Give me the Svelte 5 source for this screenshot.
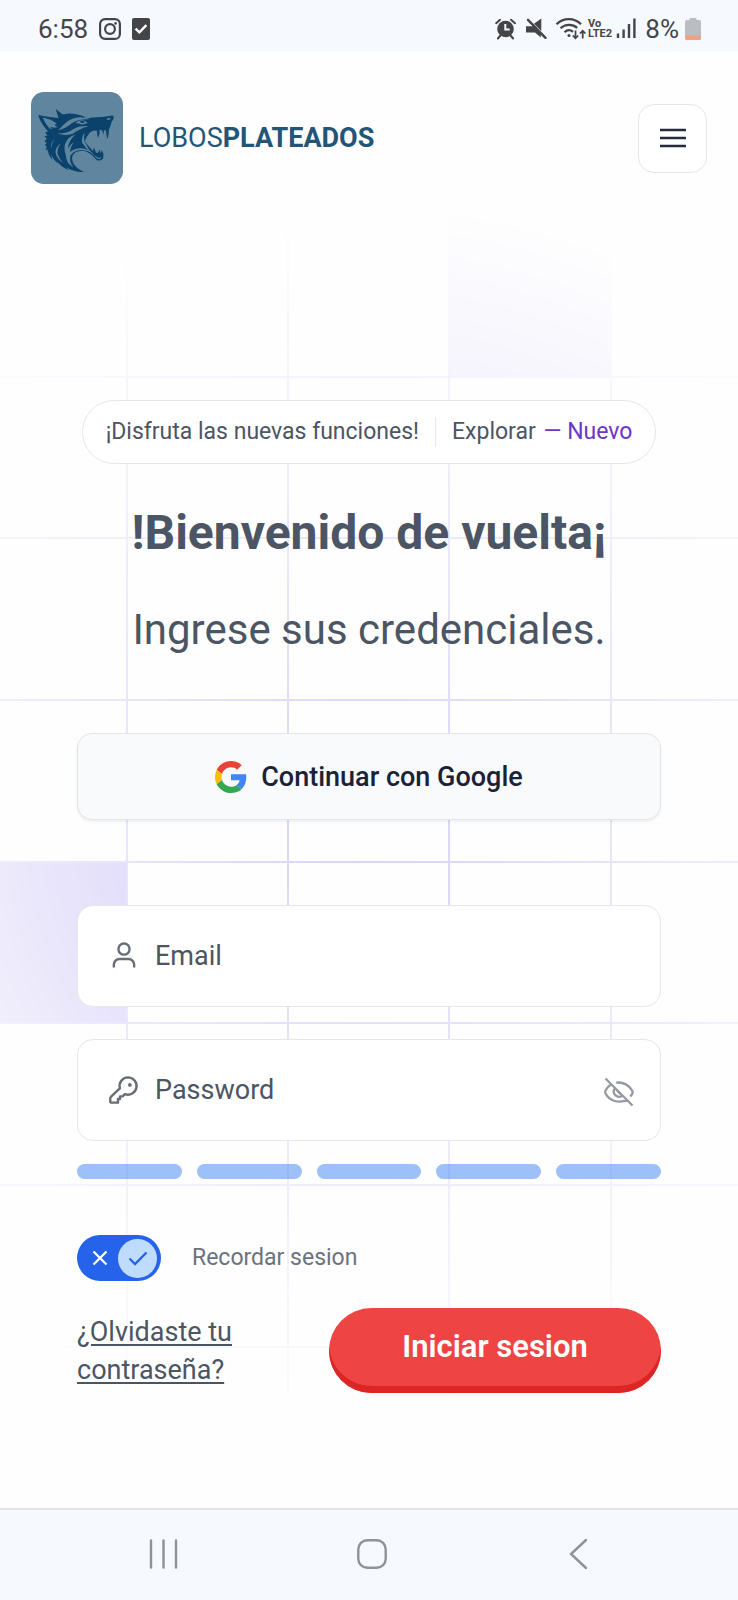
<script>
  let email = $state('');
  let password = $state('');
  let remember = $state(true);
  let visible = $state(false);

  const pitch = 162;
  const columns = [-196, -34, 127, 288, 449, 611, 772, 934];
  const rows = [54, 215, 377, 538, 700, 862, 1023, 1185, 1347];
  const strength = [1, 2, 3, 4, 5];
</script>

<div class="screen">
  <svg class="grid" viewBox="0 0 738 1395" preserveAspectRatio="xMidYMin meet" aria-hidden="true">
    <defs>
      <radialGradient id="fade" gradientUnits="userSpaceOnUse" cx="369" cy="830" r="630">
        <stop offset="0" stop-color="#fff" />
        <stop offset="0.2" stop-color="#fff" stop-opacity="0.85" />
        <stop offset="0.6" stop-color="#fff" stop-opacity="0.36" />
        <stop offset="1" stop-color="#fff" stop-opacity="0" />
      </radialGradient>
      <mask id="spot" maskUnits="userSpaceOnUse" x="-400" y="0" width="1538" height="1395">
        <rect x="-400" y="0" width="1538" height="1395" fill="url(#fade)" />
      </mask>
    </defs>
    <g mask="url(#spot)">
      <rect x="449" y="215" width={pitch} height={pitch} fill="#dcd6fb" />
      <rect x="-34" y="862" width={pitch} height={pitch} fill="#d2caf8" />
      {#each columns as x}
        <path d="M{x} 0V1395" />
      {/each}
      {#each rows as y}
        <path d="M-400 {y}H1138" />
      {/each}
    </g>
  </svg>

  <div class="status">
    <div class="status-side">
      <span>6:58</span>
      <svg class="insta" width="22" height="22" viewBox="0 0 22 22" fill="none" stroke="#454548" stroke-width="2.2">
        <rect x="1.1" y="1.1" width="19.8" height="19.8" rx="5" />
        <circle cx="11" cy="11" r="4.9" />
        <circle cx="16.6" cy="5.4" r="1.3" fill="#454548" stroke="none" />
      </svg>
      <svg width="18" height="22" viewBox="0 0 18 22">
        <rect width="18" height="22" rx="2" fill="#454548" />
        <path d="M3.6 10.6l3.8 3.8 7-7.2" fill="none" stroke="#fff" stroke-width="2.4" />
      </svg>
    </div>
    <div class="status-side right">
      <svg width="142" height="24" viewBox="0 0 142 24" fill="none" stroke="#454548">
        <g stroke-width="2" stroke-linecap="round">
          <circle cx="10.5" cy="12" r="8.3" fill="#454548" stroke="none" />
          <path d="M1.2 6.2L5 2.8M20 6.2L16 2.8M5.5 18.5l-2.6 3M15.5 18.5l2.6 3" />
          <path d="M10.3 7v5.6h4.4" stroke="#f6f9fe" stroke-linecap="butt" />
        </g>
        <path d="M39 6.800L46.300 1.500V14zM31 9.200h7.500l7.300 7.300V20.500L40 15.500h-9z" stroke="none" fill="#454548" />
        <path d="M33 2.800L50.500 20.800" stroke-width="2.400" stroke-linecap="round" />
        <g stroke-width="2.200">
          <path d="M61.500 7.200C68.500.3 79.500.3 86 7.200M65.500 11.300c4.800-4.600 12-4.600 16.700-.5M69.500 15.200c2.600-2.400 6-2.400 8.500-.3" />
          <circle cx="74" cy="18.500" r="1.500" fill="#454548" stroke="none" />
          <path d="M80.500 13.500V21M77.800 18.500l2.700 2.800 2.700-2.800M87.700 21.500V14M85 16.500l2.700-2.800 2.700 2.800" stroke-width="1.800" />
        </g>
        <g class="volte" stroke="none" fill="#454548">
          <text x="93" y="10">Vo</text>
          <text x="93" y="20">LTE2</text>
        </g>
        <path d="M123 16.500V21M128.600 12.500V21M134 7V21M139.400 1.500V21" stroke-width="2.400" />
      </svg>
      <span>8%</span>
      <svg class="battery" width="16" height="22" viewBox="0 0 16 22">
        <path d="M4.500 2V1q0-1 1-1h5q1 0 1 1V2H14q2 0 2 2v16q0 2-2 2H2q-2 0-2-2V4q0-2 2-2z" fill="#babdc1" />
        <path d="M0 17.500h16V20q0 2-2 2H2q-2 0-2-2z" fill="#f0a184" />
      </svg>
    </div>
  </div>

  <header>
    <a class="brand" href="#inicio">
      <svg class="logo" viewBox="33 36 275 275" aria-hidden="true">
        <rect x="33" y="36" width="275" height="275" rx="38" fill="#60859f" />
        <path
          fill="#0a426b"
          d="M54 105L88 111L115 114L107 87L128 103Q156 97 178 105Q190 107 201 116L215 112Q245 112 277 106L281 111Q279 120 274 125Q271 138 266 148Q266 164 261 177Q258 164 257 151L251 150L250 163L245 150L238 149Q239 162 234 173Q230 164 230 152Q217 149 207 159Q197 171 194 184Q206 200 218 212L221 202L227 217L233 218L238 208L241 219L245 209Q252 221 249 234Q241 245 229 239Q218 223 201 215Q182 207 165 217Q151 229 158 246Q166 263 191 275Q164 277 139 262L145 270Q119 256 110 242L113 250Q98 237 93 222L97 240Q84 222 82 207L76 210L80 198L74 196L80 188L73 184L80 176L73 168L82 166L75 156L84 154Q64 133 54 105Z"
        />
        <g fill="#60859f">
          <path d="M68 112L92 119L110 130L103 134L112 141L102 143L88 139L97 146L88 145Q75 131 68 112Z" />
          <path d="M114 150L128 136Q143 120 166 113Q190 108 206 118Q177 116 154 130Q136 146 114 150Z" />
          <path d="M172 124Q184 117 195 123L202 129Q188 137 176 130L165 129Z" />
          <path d="M112 160Q142 160 158 148Q176 136 207 138Q190 142 178 149Q166 153 158 161Q136 168 112 160Z" />
          <path d="M165 164Q146 181 143 205Q150 193 161 186Q149 203 150 215Q167 201 190 205Q211 210 223 226L235 233L243 230L239 237L229 234Q213 212 191 210Q166 207 151 226Q146 249 161 262Q138 250 137 225Q128 198 139 183Q148 168 165 164Z" />
          <path d="M122 190Q112 202 112 219Q118 238 130 248Q108 235 106 215Q108 198 122 190ZM105 176Q94 188 95 204Q88 190 105 176Z" />
          <path d="M193 158Q185 168 185 187Q198 207 216 220Q204 207 197 191Q189 184 193 158Z" />
          <path d="M260 115L272 113L267 120L259 119Z" />
        </g>
        <path d="M178 125Q186 119 194 126Q187 132 178 125Z" fill="#0a426b" />
      </svg>
      <span class="name">LOBOS<b>PLATEADOS</b></span>
    </a>
    <button class="menu" type="button" aria-label="Menú">
      <svg width="26" height="20" viewBox="0 0 26 20" stroke="#272b40" stroke-width="2.500"><path d="M0 2h26M0 10h26M0 18h26" /></svg>
    </button>
  </header>

  <main>
    <div class="pill">
      <span>¡Disfruta las nuevas funciones!</span>
      <a href="#explorar">Explorar <em>— Nuevo</em></a>
    </div>

    <h1>!Bienvenido de vuelta¡</h1>
    <p class="lead">Ingrese sus credenciales.</p>

    <form onsubmit={(e) => e.preventDefault()}>
      <button class="google" type="button">
        <svg width="32" height="32" viewBox="0 0 48 48" aria-hidden="true">
          <path fill="#EA4335" d="M24 9.500c3.540 0 6.710 1.220 9.210 3.600l6.850-6.850C35.900 2.380 30.470 0 24 0 14.620 0 6.510 5.380 2.560 13.220l7.980 6.190C12.430 13.720 17.740 9.500 24 9.500z" />
          <path fill="#4285F4" d="M46.980 24.550c0-1.570-.15-3.090-.38-4.550H24v9.020h12.940c-.58 2.960-2.260 5.480-4.780 7.180l7.730 6c4.510-4.180 7.090-10.360 7.090-17.650z" />
          <path fill="#FBBC05" d="M10.530 28.590A14.500 14.500 0 0 1 9.770 24c0-1.600.27-3.140.76-4.590l-7.980-6.190A23.900 23.900 0 0 0 0 24c0 3.880.92 7.540 2.560 10.780z" />
          <path fill="#34A853" d="M24 48c6.480 0 11.930-2.130 15.890-5.810l-7.730-6c-2.150 1.450-4.920 2.300-8.160 2.300-6.260 0-11.570-4.220-13.470-9.910l-7.980 6.190C6.510 42.620 14.620 48 24 48z" />
        </svg>
        Continuar con Google
      </button>

      <div class="field">
        <svg class="icon" viewBox="0 0 24 24" aria-hidden="true"><circle cx="12" cy="6.800" r="4.200" /><path d="M4.400 20.600V18.400a4.200 4.200 0 0 1 4.200-4.200h6.800a4.200 4.200 0 0 1 4.200 4.200v2.200" /></svg>
        <label for="email">Email</label>
        <input id="email" type="email" bind:value={email} />
      </div>

      <div class="field password">
        <svg class="icon" viewBox="0 0 24 24" aria-hidden="true">
          <path d="M15 2.500a6.500 6.500 0 1 1-2.300 12.600L11 16.800H9v2H7.500v2.700H2.600q-.9 0-.9-.9v-2.300q0-.8.600-1.400l6.600-6.200A6.500 6.500 0 0 1 15 2.500z" />
          <circle cx="16.400" cy="8.200" r="1.400" class="dot" />
        </svg>
        <label for="password">Password</label>
        <input id="password" type={visible ? 'text' : 'password'} bind:value={password} />
        <button class="eye" type="button" aria-label="Mostrar password" onclick={() => (visible = !visible)}>
          <svg viewBox="0 0 30 30" width="30" height="30">
            <path d="M1.500 1.500l27 27M12.200 5.700c7-1.200 13.600 3 16 8q.8 1.700 0 3.200-.8 1.500-2 2.600M7 7.500c-2.400 1.500-4.300 3.600-5.400 5.900q-.8 1.600 0 3.200c3.600 7.400 13.600 10.300 21.500 6.200M10.800 11.300a5.300 5.300 0 0 0 7.400 7.400M12.500 12.500q3 4.500 5 4.500" />
          </svg>
        </button>
      </div>

      <div class="meter" aria-hidden="true">
        {#each strength as step (step)}<i></i>{/each}
      </div>

      <label class="remember">
        <input type="checkbox" bind:checked={remember} />
        <span class="switch">
          <svg width="16" height="16" viewBox="0 0 16 16"><path d="M1.500 1.500l13 13M14.500 1.500l-13 13" /></svg>
          <span class="knob"><svg width="20" height="16" viewBox="0 0 20 16"><path d="M1.500 8.500L7 14 18.500 2.500" /></svg></span>
        </span>
        <span>Recordar sesion</span>
      </label>

      <div class="actions">
        <a href="#recuperar">¿Olvidaste tu contraseña?</a>
        <button class="submit" type="submit">Iniciar sesion</button>
      </div>
    </form>
  </main>

  <nav aria-label="Sistema">
    <button type="button" aria-label="Recientes"><svg width="32" height="32" viewBox="0 0 32 32"><path d="M3 2.500v27M15.500 2.500v27M28 2.500v27" /></svg></button>
    <button type="button" aria-label="Inicio"><svg width="32" height="32" viewBox="0 0 32 32"><rect x="2.300" y="2.300" width="27.400" height="27.400" rx="9" /></svg></button>
    <button type="button" aria-label="Atrás"><svg width="32" height="32" viewBox="0 0 32 32"><path d="M23 2L8 16l15 14" /></svg></button>
  </nav>
</div>

<style>
  :global(body) {
    margin: 0;
    background: #fefefe;
  }
  .screen,
  .screen * {
    box-sizing: border-box;
  }
  .screen {
    position: relative;
    display: flex;
    flex-direction: column;
    min-height: 100vh;
    overflow: hidden;
    font-family: Roboto, sans-serif;
    font-size: 27px;
    line-height: 38px;
    color: #4b5563;
  }
  svg {
    display: block;
    flex: none;
  }
  button {
    font: inherit;
    color: inherit;
    cursor: pointer;
  }
  .grid {
    position: absolute;
    top: 0;
    left: 0;
    width: 100%;
    height: 1395px;
    overflow: visible;
  }
  .grid path {
    stroke: #d9d3f8;
    stroke-width: 2;
  }
  .status {
    position: relative;
    display: flex;
    justify-content: space-between;
    align-items: center;
    height: 52px;
    padding: 6px 37px 0 38px;
    background: #f6f9fe;
    color: #454548;
    font-size: 26px;
    line-height: 32px;
  }
  .status-side {
    display: flex;
    align-items: center;
    gap: 11px;
  }
  .right {
    gap: 6px;
  }
  .right span {
    padding-left: 2px;
  }
  .volte {
    font-size: 11px;
    font-weight: 700;
  }
  header {
    position: relative;
    display: flex;
    justify-content: space-between;
    align-items: center;
    padding: 40px 31px 0;
  }
  .brand {
    display: flex;
    align-items: center;
    gap: 16px;
    color: #225577;
    text-decoration: none;
  }
  .logo {
    width: 92px;
    height: 92px;
  }
  .name {
    font-weight: 400;
  }
  .name b {
    font-weight: 700;
  }
  .menu {
    display: grid;
    place-items: center;
    width: 69px;
    height: 69px;
    padding: 0;
    border: 1px solid #e5e7eb;
    border-radius: 16px;
    background: #fff;
  }
  main {
    position: relative;
    display: flex;
    flex-direction: column;
    align-items: center;
    padding: 216px 77px 114px;
  }
  .pill {
    display: flex;
    align-items: center;
    height: 64px;
    padding: 0 23px;
    border: 1px solid #e5e7eb;
    border-radius: 32px;
    background: #fff;
    font-size: 23px;
    white-space: nowrap;
  }
  .pill a {
    margin-left: 16px;
    padding-left: 16px;
    border-left: 1px solid #e5e7eb;
    line-height: 30px;
    color: inherit;
    text-decoration: none;
  }
  .pill em {
    margin-left: 2px;
    font-style: normal;
    color: #6d35c9;
  }
  h1 {
    margin: 40px 0 0;
    font-size: 48px;
    font-weight: 700;
    line-height: 58px;
    white-space: nowrap;
  }
  .lead {
    margin: 40px 0 0;
    font-size: 42px;
    line-height: 56px;
    white-space: nowrap;
  }
  form {
    display: flex;
    flex-direction: column;
    width: 100%;
    margin-top: 75px;
  }
  .google {
    display: flex;
    justify-content: center;
    align-items: center;
    gap: 14px;
    height: 87px;
    border: 1px solid #e2e6ea;
    border-radius: 15px;
    background: #f8fafc;
    box-shadow: 0 2px 3px rgba(0, 0, 0, 0.06);
    font-weight: 500;
    color: #1b2236;
  }
  .field {
    display: flex;
    align-items: center;
    height: 102px;
    margin-top: 85px;
    padding: 0 26px 0 30px;
    border: 1px solid #e5e7eb;
    border-radius: 16px;
    background: #fff;
  }
  .password {
    margin-top: 32px;
  }
  .icon {
    width: 32px;
    height: 32px;
    margin-right: 15px;
    fill: none;
    stroke: #686d77;
    stroke-width: 1.8;
    stroke-linejoin: round;
  }
  .dot {
    fill: #686d77;
    stroke: none;
  }
  .field input {
    flex: 1;
    min-width: 0;
    height: 100%;
    margin-left: 8px;
    border: 0;
    outline: 0;
    background: none;
    font: inherit;
    color: inherit;
  }
  .eye {
    display: flex;
    padding: 4px 0 0;
    border: 0;
    background: none;
  }
  .eye path {
    fill: none;
    stroke: #9499a2;
    stroke-width: 2.3;
  }
  .meter {
    display: grid;
    grid-template-columns: repeat(5, 1fr);
    gap: 15px;
    margin-top: 23px;
  }
  .meter i {
    height: 15px;
    border-radius: 8px;
    background: rgba(59, 130, 246, 0.5);
  }
  .remember {
    position: relative;
    display: flex;
    align-items: center;
    gap: 31px;
    margin-top: 56px;
    font-size: 23px;
    color: #6b7280;
  }
  .remember input {
    position: absolute;
    opacity: 0;
  }
  .switch {
    display: flex;
    align-items: center;
    justify-content: space-between;
    width: 84px;
    height: 46px;
    padding: 0 4px 0 15px;
    border-radius: 23px;
    background: #2563eb;
  }
  .switch path {
    fill: none;
    stroke: #fff;
    stroke-width: 2.3;
  }
  .switch .knob {
    display: grid;
    place-items: center;
    width: 39px;
    height: 39px;
    border-radius: 50%;
    background: #bfdbfe;
  }
  .switch .knob path {
    stroke: #2563eb;
  }
  .actions {
    display: flex;
    align-items: center;
    justify-content: space-between;
    gap: 31px;
    margin-top: 27px;
  }
  .actions a {
    flex: 1;
    color: inherit;
    text-underline-offset: 3px;
  }
  .submit {
    flex: none;
    width: 332px;
    height: 85px;
    padding: 0 0 7px;
    border: 0;
    border-radius: 43px;
    background: #ef4444;
    box-shadow: inset 0 -7px #dc2626;
    font-size: 31px;
    font-weight: 600;
    color: #fff;
  }
  nav {
    position: relative;
    display: flex;
    justify-content: space-between;
    align-items: center;
    height: 92px;
    margin-top: auto;
    padding: 0 143px 2px 148px;
    border-top: 2px solid #e0e2e6;
    background: #f6f9fe;
  }
  nav button {
    padding: 0;
    border: 0;
    background: none;
  }
  nav svg {
    fill: none;
    stroke: #8f9196;
    stroke-width: 2.4;
    stroke-linecap: round;
  }
</style>
